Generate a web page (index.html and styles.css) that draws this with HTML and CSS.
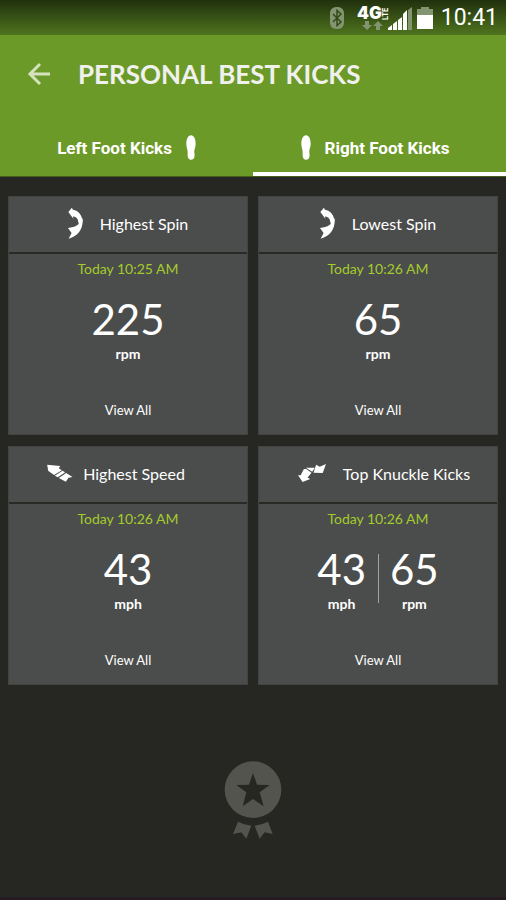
FILE: index.html
```html
<!DOCTYPE html>
<html lang="en">
<head>
<meta charset="utf-8">
<meta name="viewport" content="width=device-width, initial-scale=1">
<title>Personal Best Kicks</title>
<link rel="stylesheet" href="styles.css">
</head>
<body>
<svg class="defs" aria-hidden="true">
  <symbol id="spin" viewBox="198 55 46 96">
    <path d="M199 69L210 56L213 62C230 64 243 80 242 100L232 110L229 98C229 90 222 83 213 83L215 91Z"/>
    <path d="M243 88C245 122 230 142 200 151L209 134L198 118C222 118 236 106 243 88Z"/>
  </symbol>
  <symbol id="foot" viewBox="0 0 30 75">
    <path d="M15 1C24 1 29 12 29 27C29 38 24 42 25 52C27 66 25 74 16 74C7 74 4 66 5 56C6 44 1 39 1 27C1 12 6 1 15 1Z"/>
  </symbol>
</svg>

<div class="status">
  <svg class="status-bt" width="16" height="24" viewBox="0 0 16 24" role="img" aria-label="Bluetooth">
    <rect x="1" y="1" width="14" height="22" rx="6" fill="#829570"/>
    <path d="M4 8L12 16L8 19.500V4.500L12 8L4 16" fill="none" stroke="#34491a" stroke-width="1.500"/>
  </svg>
  <svg class="status-net" width="58" height="30" viewBox="0 -4 58 30">
    <text class="net-4g" x="0" y="14">4G</text>
    <text class="net-lte" transform="translate(31 15) rotate(-90)">LTE</text>
    <path d="M8 16h4v4h3l-5 5l-5-5h3zM19 25h4v-4h3l-5-5l-5 5h3z" fill="#829570"/>
    <path d="M31 25v-2l4-3v5zM36 25v-6l4-3v9zM41 25V15l4-3v13zM46 25V9l4-4v20z" fill="#fff"/>
    <path d="M51 25V5l4-3v23z" fill="#829570"/>
  </svg>
  <svg class="status-bat" width="16" height="22" viewBox="0 0 16 22" role="img" aria-label="Battery">
    <path d="M0 2h4V0h8v2h4v6H0z" fill="#829570"/>
    <path d="M0 8h16v14H0z" fill="#fff"/>
  </svg>
  <time class="clock">10:41</time>
</div>

<header class="appbar">
  <div class="titlebar">
    <button class="back" aria-label="Back">
      <svg width="24" height="24" viewBox="0 0 24 24"><path d="M23 12H2M13 2L3 12L13 22" fill="none" stroke="currentColor" stroke-width="3"/></svg>
    </button>
    <h1>PERSONAL BEST KICKS</h1>
  </div>
  <nav class="tabs">
    <a class="tab" href="#left">Left Foot Kicks <svg width="10" height="25"><use href="#foot"/></svg></a>
    <a class="tab tab-active" href="#right" aria-current="page"><svg width="10" height="25"><use href="#foot"/></svg> Right Foot Kicks</a>
  </nav>
</header>

<main class="cards">
  <section class="card">
    <h2 class="card-head"><svg width="15" height="32"><use href="#spin"/></svg>Highest Spin</h2>
    <p class="date">Today 10:25 AM</p>
    <div class="values"><p class="stat"><span class="num">225</span><span class="unit">rpm</span></p></div>
    <a class="view" href="#highest-spin">View All</a>
  </section>
  <section class="card">
    <h2 class="card-head"><svg width="15" height="32"><use href="#spin"/></svg>Lowest Spin</h2>
    <p class="date">Today 10:26 AM</p>
    <div class="values"><p class="stat"><span class="num">65</span><span class="unit">rpm</span></p></div>
    <a class="view" href="#lowest-spin">View All</a>
  </section>
  <section class="card">
    <h2 class="card-head head-speed">
      <svg width="26" height="18" viewBox="17 40 77 54">
        <path d="M17 42L56 46L52 53L61 59L38 73L29 67L20 60Z"/>
        <path d="M63 60L71 65L49 80L40 75Z"/>
        <path d="M74 67L93 79L81 81L73 93L52 82Z"/>
      </svg>Highest Speed</h2>
    <p class="date">Today 10:26 AM</p>
    <div class="values"><p class="stat"><span class="num">43</span><span class="unit">mph</span></p></div>
    <a class="view" href="#highest-speed">View All</a>
  </section>
  <section class="card">
    <h2 class="card-head head-knuckle">
      <svg width="28" height="18" viewBox="24 41 85 54">
        <path d="M24 75L32 75L42 56L49 56L65 67L53 82L61 86L38 95Z"/>
        <path d="M48 52L75 52L67 64Z"/>
        <path d="M79 43L90 49L109 41L99 68L71 67Z"/>
      </svg>Top Knuckle Kicks</h2>
    <p class="date">Today 10:26 AM</p>
    <div class="values">
      <p class="stat"><span class="num">43</span><span class="unit">mph</span></p>
      <p class="stat"><span class="num">65</span><span class="unit">rpm</span></p>
    </div>
    <a class="view" href="#knuckle">View All</a>
  </section>
</main>

<div class="award">
  <svg width="58" height="78" viewBox="43 35 172 234" role="img" aria-label="Award">
    <path fill-rule="evenodd" d="M129 36A85 85 0 1 1 129 206A85 85 0 1 1 129 36ZM129 71L117 106L79 107L109 129L98 171L129 149L161 171L149 129L179 107L141 106Z"/>
    <path d="M84 217Q103 227 124 229L109 268L94 249L69 254ZM174 217Q155 227 134 229L149 268L164 249L188 254Z"/>
  </svg>
</div>
</body>
</html>
```
FILE: styles.css
```css
* { box-sizing: border-box; }

body {
  margin: 0;
  min-height: 100vh;
  display: flex;
  flex-direction: column;
  background: #262722;
  border-bottom: 3px solid #261b22;
  color: #fff;
  font-family: Lato, sans-serif;
}

h1, h2, p { margin: 0; }
a { color: inherit; text-decoration: none; }
svg { flex: none; fill: currentColor; }
.defs { position: absolute; width: 0; height: 0; }

.status {
  height: 35px;
  padding: 0 8px;
  display: flex;
  align-items: center;
  justify-content: flex-end;
  background: linear-gradient(#20300d, #4f741e);
}
.status-net { margin: 0 2px 4px 12px; }
.net-4g { font: 900 17px Inter, sans-serif; fill: #fff; }
.net-lte { font: 800 7px Inter, sans-serif; fill: #fff; }
.clock { margin-left: 8px; font: 23px Roboto, sans-serif; }

.appbar { background: #6c9a28; border-bottom: 1px solid #45601d; }
.titlebar {
  height: 78px;
  padding: 0 27px;
  display: flex;
  align-items: center;
  gap: 27px;
}
.back {
  padding: 0;
  border: 0;
  background: none;
  color: #d5e2bf;
  display: flex;
}
h1 { font-size: 26px; line-height: 32px; color: #f0f1ee; }

.tabs { display: grid; grid-template-columns: 1fr 1fr; }
.tab {
  height: 63px;
  padding-top: 10px;
  border-bottom: 4px solid transparent;
  display: flex;
  align-items: center;
  justify-content: center;
  gap: 14px;
  font: 700 17px Roboto, sans-serif;
}
.tab-active { padding-right: 9px; border-color: #fff; }

.cards {
  padding: 19px 8px 0;
  display: grid;
  grid-template-columns: 1fr 1fr;
  gap: 11px 10px;
}
.card {
  background: #4b4d4c;
  border: 1px solid #424442;
  text-align: center;
  display: flex;
  flex-direction: column;
}
.card-head {
  height: 57px;
  padding-bottom: 3px;
  border-bottom: 2px solid #282a26;
  display: flex;
  align-items: center;
  justify-content: center;
  gap: 17px;
  font-size: 16px;
  font-weight: 400;
}
.head-speed { gap: 10px; padding-right: 24px; }
.head-knuckle { padding-left: 12px; }
.date {
  padding-top: 5px;
  font-size: 14px;
  line-height: 20px;
  color: #a4cb2c;
}
.values {
  padding-top: 14px;
  display: flex;
  justify-content: center;
}
.stat { display: flex; flex-direction: column; padding: 0 12px; position: relative; }
.stat + .stat::before {
  content: "";
  position: absolute;
  left: 0;
  top: 11px;
  bottom: 10px;
  width: 1px;
  background: #a3a4a3;
}
.num { font-size: 42px; line-height: 52px; }
.unit { font-size: 14px; font-weight: 700; line-height: 18px; }
.view {
  align-self: center;
  margin-top: 37px;
  padding-bottom: 14px;
  font-size: 13px;
  line-height: 20px;
}

.award {
  flex: 1;
  padding-top: 76px;
  text-align: center;
  color: #53544e;
}
```
